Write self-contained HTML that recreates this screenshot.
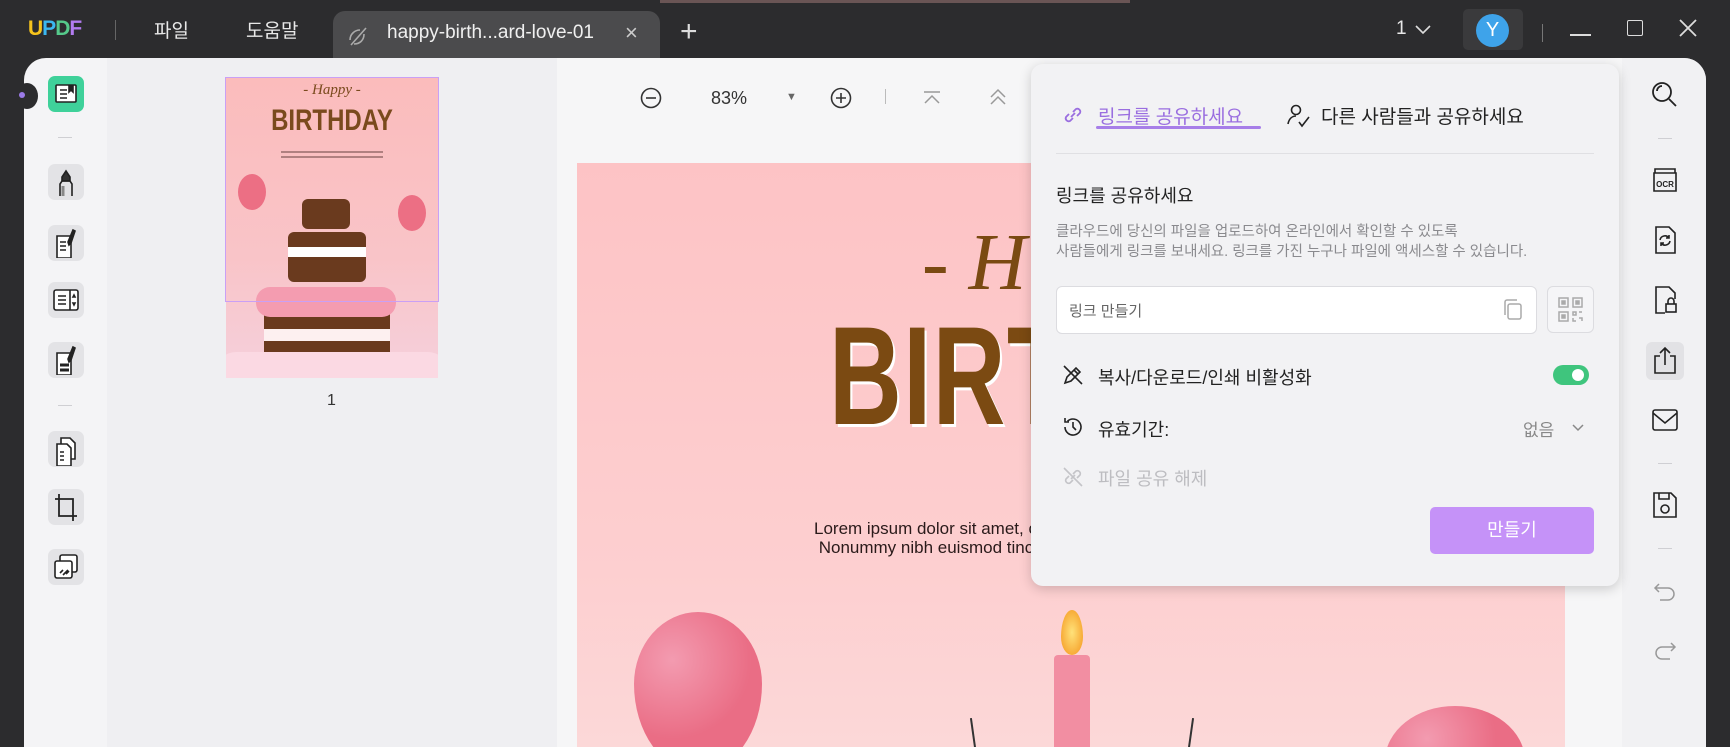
<!DOCTYPE html>
<html><head><meta charset="utf-8">
<style>
*{margin:0;padding:0;box-sizing:border-box}
body{width:1730px;height:747px;overflow:hidden;background:#2c2c2e;font-family:"Liberation Sans","Noto Sans CJK KR",sans-serif;position:relative}
.a{position:absolute}
.tb{color:#e8e8e8;font-size:19px}
.ib{position:absolute;left:48px;width:36px;height:36px;border-radius:7px;background:#e3e3e6}
.ri{position:absolute;left:1649px;width:32px;height:32px}
.sep{position:absolute;height:1px;background:#cfcfd3}
svg{display:block}
</style></head><body>
<!-- title bar -->
<div class="a" style="left:660px;top:0;width:470px;height:3px;background:#6a5555"></div>
<div class="a" style="left:28px;top:17px;font-size:21px;font-weight:bold;letter-spacing:-1px"><span style="color:#f5c31c">U</span><span style="color:#3bb8f0">P</span><span style="color:#55c98a">D</span><span style="color:#b27cf0">F</span></div>
<div class="a" style="left:115px;top:20px;width:1px;height:20px;background:#666"></div>
<div class="a tb" style="left:154px;top:16px">파일</div>
<div class="a tb" style="left:246px;top:16px">도움말</div>
<div class="a" style="left:333px;top:11px;width:327px;height:50px;background:#4b4b4d;border-radius:12px 12px 0 0"></div>
<svg class="a" style="left:346px;top:24px" width="24" height="24" viewBox="0 0 24 24" fill="none" stroke="#aaa" stroke-width="1.6"><path d="M4 16c0-6 5-10 10-10M8 20c6 0 10-4 10-10M5 21L20 4"/></svg>
<div class="a" style="left:387px;top:22px;color:#f0f0f0;font-size:19px">happy-birth...ard-love-01</div>
<div class="a" style="left:625px;top:20px;color:#ccc;font-size:22px">×</div>
<div class="a" style="left:680px;top:15px;color:#ddd;font-size:30px;font-weight:300">+</div>
<div class="a tb" style="left:1396px;top:18px">1</div>
<svg class="a" style="left:1414px;top:22px" width="18" height="14" viewBox="0 0 18 14" fill="none" stroke="#ddd" stroke-width="1.6"><path d="M2 4l7 7 7-7"/></svg>
<div class="a" style="left:1463px;top:9px;width:60px;height:41px;background:#3a3a3c;border-radius:5px"></div>
<div class="a" style="left:1476px;top:14px;width:33px;height:33px;border-radius:50%;background:#3ea3ea;color:#fff;font-size:20px;text-align:center;line-height:33px">Y</div>
<div class="a" style="left:1542px;top:24px;width:1px;height:18px;background:#777"></div>
<div class="a" style="left:1570px;top:34px;width:21px;height:2px;background:#ddd"></div>
<div class="a" style="left:1627px;top:20px;width:16px;height:16px;border:1.8px solid #ddd;border-radius:2px"></div>
<svg class="a" style="left:1679px;top:19px" width="18" height="18" viewBox="0 0 18 18" stroke="#ddd" stroke-width="1.8"><path d="M1 1l16 16M17 1L1 17"/></svg>

<!-- main container -->
<div class="a" style="left:24px;top:58px;width:1682px;height:689px;background:#f4f4f6;border-radius:22px 22px 0 0;overflow:hidden">
  <div class="a" style="left:83px;top:0;width:450px;height:689px;background:#efeff2"></div>
  <div class="a" style="left:533px;top:0;width:1065px;height:689px;background:#f6f6f7"></div>
  <div class="a" style="left:1598px;top:0;width:84px;height:689px;background:#f1f1f3"></div>
</div>
<div class="a" style="left:16px;top:83px;width:22px;height:26px;border-radius:50%;background:#2c2c2e"></div>
<div class="a" style="left:19px;top:92px;width:6px;height:6px;border-radius:50%;background:#9b7ae8"></div>

<!-- left toolbar -->
<div class="ib" style="top:76px;background:#3fd19a"></div>
<svg class="a" style="left:54px;top:82px" width="24" height="24" viewBox="0 0 24 24" fill="#fff" stroke="#222" stroke-width="1.6"><rect x="2" y="3" width="20" height="17" rx="1"/><path d="M6 8h7M6 12h7M6 16h7" /><path d="M15 3v7l2-2 2 2V3" fill="#222"/></svg>
<div class="sep" style="left:58px;top:137px;width:14px"></div>
<div class="ib" style="top:164px"></div>
<svg class="a" style="left:54px;top:168px" width="24" height="28" viewBox="0 0 24 28" fill="none" stroke="#222" stroke-width="1.6"><path d="M12 3l4 6v4H8V9z" fill="#333"/><path d="M6 28V16l2-3h8l2 3v12"/><path d="M9 18v10" stroke="#888" stroke-width="3"/></svg>
<div class="ib" style="top:225px"></div>
<svg class="a" style="left:53px;top:228px" width="26" height="30" viewBox="0 0 26 30" fill="#fff" stroke="#222" stroke-width="1.6"><path d="M4 8h14v22H4z"/><path d="M7 14h6M7 18h6M7 22h6"/><path d="M20 2l2 1-4 12-2 2-1-3z" fill="#222"/></svg>
<div class="ib" style="top:282px"></div>
<svg class="a" style="left:52px;top:288px" width="28" height="24" viewBox="0 0 28 24" fill="#fff" stroke="#222" stroke-width="1.6"><rect x="2" y="2" width="24" height="20" rx="2"/><path d="M6 8h8M6 12h8M6 16h8M18 2v20"/><path d="M21 9l1-2 1 2zM21 15l1 2 1-2z" fill="#222"/></svg>
<div class="ib" style="top:342px"></div>
<svg class="a" style="left:53px;top:345px" width="26" height="30" viewBox="0 0 26 30" fill="#fff" stroke="#222" stroke-width="1.6"><path d="M4 8h14v22H4z"/><path d="M7 20h9M7 25h9" stroke-width="3"/><path d="M20 2l2 1-4 12-2 2-1-3z" fill="#222"/></svg>
<div class="sep" style="left:58px;top:405px;width:14px"></div>
<div class="ib" style="top:431px"></div>
<svg class="a" style="left:53px;top:436px" width="26" height="30" viewBox="0 0 26 30" fill="#fff" stroke="#222" stroke-width="1.6"><path d="M8 2h9l5 5v16H8z"/><path d="M4 8h10l4 4v18H4z"/><path d="M7 16h4M7 20h4M7 24h4"/></svg>
<div class="ib" style="top:489px"></div>
<svg class="a" style="left:52px;top:492px" width="28" height="30" viewBox="0 0 28 30" fill="none" stroke="#222" stroke-width="1.8"><path d="M7 2v22h18M3 7h18v22"/></svg>
<div class="ib" style="top:549px"></div>
<svg class="a" style="left:53px;top:553px" width="26" height="28" viewBox="0 0 26 28" fill="#fff" stroke="#222" stroke-width="1.6"><rect x="7" y="2" width="17" height="17" rx="2"/><rect x="2" y="8" width="17" height="17" rx="2"/><path d="M7 20l3-3M10 22l5-5M13 21l3-3"/></svg>

<!-- thumbnail -->
<div class="a" style="left:226px;top:77px;width:212px;height:301px;background:linear-gradient(#fbbcbc,#f9c4c8 60%,#f5d0dc);overflow:hidden">
  <div class="a" style="left:0;top:5px;width:212px;text-align:center;font-family:'Liberation Serif',serif;font-style:italic;color:#7a4a1d;font-size:15px">- Happy -</div>
  <div class="a" style="left:0;top:27px;width:212px;text-align:center;font-family:'Liberation Sans Narrow','Liberation Sans',sans-serif;font-weight:bold;color:#7a4a1d;font-size:30px;transform:scaleX(.8)">BIRTHDAY</div>
  <div class="a" style="left:55px;top:74px;width:102px;height:2px;background:#b08080"></div>
  <div class="a" style="left:55px;top:79px;width:102px;height:2px;background:#b08080"></div>
  <div class="a" style="left:12px;top:97px;width:28px;height:36px;border-radius:50%;background:#ec6f84"></div>
  <div class="a" style="left:172px;top:118px;width:28px;height:36px;border-radius:50%;background:#ec6f84"></div>
  <div class="a" style="left:76px;top:122px;width:48px;height:30px;background:#6a3a1e;border-radius:6px"></div>
  <div class="a" style="left:62px;top:155px;width:78px;height:50px;background:#6a3a1e;border-radius:6px"></div>
  <div class="a" style="left:62px;top:170px;width:78px;height:10px;background:#fff"></div>
  <div class="a" style="left:38px;top:230px;width:126px;height:55px;background:#6a3a1e;border-radius:8px"></div>
  <div class="a" style="left:38px;top:252px;width:126px;height:12px;background:#fdf0f0"></div>
  <div class="a" style="left:30px;top:210px;width:140px;height:30px;background:#f49cb0;border-radius:14px"></div>
  <div class="a" style="left:-10px;top:275px;width:232px;height:40px;background:#fbd9e3;border-radius:20px"></div>
</div>
<div class="a" style="left:225px;top:77px;width:214px;height:225px;border:1.5px solid #c9a0f5"></div>
<div class="a" style="left:327px;top:392px;font-size:16px;color:#333">1</div>

<!-- doc toolbar -->
<svg class="a" style="left:640px;top:87px" width="22" height="22" viewBox="0 0 22 22" fill="none" stroke="#333" stroke-width="1.6"><circle cx="11" cy="11" r="9.5"/><path d="M6 11h10"/></svg>
<div class="a" style="left:711px;top:88px;font-size:18px;color:#333">83%</div>
<div class="a" style="left:786px;top:91px;font-size:11px;color:#666">▼</div>
<svg class="a" style="left:830px;top:87px" width="22" height="22" viewBox="0 0 22 22" fill="none" stroke="#333" stroke-width="1.6"><circle cx="11" cy="11" r="9.5"/><path d="M6 11h10M11 6v10"/></svg>
<div class="a" style="left:885px;top:89px;width:1px;height:15px;background:#bbb"></div>
<svg class="a" style="left:922px;top:90px" width="20" height="16" viewBox="0 0 20 16" fill="none" stroke="#999" stroke-width="1.5"><path d="M2 2h16M3 13l7-7 7 7"/></svg>
<svg class="a" style="left:988px;top:88px" width="20" height="18" viewBox="0 0 20 18" fill="none" stroke="#999" stroke-width="1.5"><path d="M3 9l7-7 7 7M3 16l7-7 7 7"/></svg>

<!-- page -->
<div class="a" style="left:577px;top:163px;width:988px;height:584px;background:linear-gradient(#fdc3c5,#fdcfd0 70%,#fcd8d8);overflow:hidden">
  <div class="a" style="left:345px;top:55px;font-family:'Liberation Serif',serif;font-style:italic;color:#7a4a12;font-size:80px">- H</div>
  <div class="a" style="left:252px;top:138px;font-family:'Liberation Sans Narrow','Liberation Sans',sans-serif;font-weight:bold;color:#7b4a12;font-size:140px;line-height:150px;letter-spacing:2px;transform:scaleX(.72);transform-origin:left;text-shadow:3px 3px 0 #fff">BIRTHDAY</div>
  <div class="a" style="left:237px;top:356px;width:700px;color:#2a1a1a;font-size:17px;line-height:19px">Lorem ipsum dolor sit amet, consectetuer adipiscing elit, sed<br>&nbsp;Nonummy nibh euismod tincidunt ut laoreet dolore magna</div>
  <div class="a" style="left:57px;top:449px;width:128px;height:160px;border-radius:50% 50% 50% 50%/45% 45% 55% 55%;background:radial-gradient(circle at 30% 30%,#f39bb0,#ea6d85 55%)"></div>
  <div class="a" style="left:808px;top:543px;width:140px;height:110px;border-radius:50%;background:radial-gradient(circle at 30% 30%,#f39bb0,#ea6d85 55%)"></div>
  <div class="a" style="left:477px;top:492px;width:36px;height:120px;background:#f28ea2;border-radius:4px"></div>
  <div class="a" style="left:484px;top:447px;width:22px;height:45px;border-radius:50% 50% 50% 50%/60% 60% 40% 40%;background:radial-gradient(#ffe27a,#f4951c)"></div>
  <div class="a" style="left:395px;top:555px;width:2px;height:30px;background:#333;transform:rotate(-8deg)"></div>
  <div class="a" style="left:613px;top:555px;width:2px;height:30px;background:#333;transform:rotate(8deg)"></div>
</div>

<!-- right toolbar -->
<svg class="ri" style="top:79px" viewBox="0 0 32 32" fill="none" stroke="#222" stroke-width="1.8"><circle cx="13" cy="13" r="9"/><path d="M20 20l7 7M8 12a5 5 0 0 1 5-5"/></svg>
<div class="sep" style="left:1658px;top:138px;width:14px"></div>
<svg class="ri" style="top:164px" viewBox="0 0 32 32" fill="none" stroke="#222" stroke-width="1.6"><path d="M6 9V5h20v4M5 9h22v18H5z"/><text x="16" y="23" font-size="8" font-family="Liberation Sans" text-anchor="middle" fill="#222" stroke="none" font-weight="bold">OCR</text></svg>
<svg class="ri" style="top:224px" viewBox="0 0 32 32" fill="none" stroke="#222" stroke-width="1.6"><path d="M7 3h13l6 6v20H7z"/><path d="M11 16a5 5 0 0 1 9-2M21 17a5 5 0 0 1-9 2M20 11v3h-3M12 22v-3h3"/></svg>
<svg class="ri" style="top:284px" viewBox="0 0 32 32" fill="none" stroke="#222" stroke-width="1.6"><path d="M16 29H7V3h13l6 6v6"/><rect x="17" y="20" width="10" height="8"/><path d="M19 20v-3a3 3 0 0 1 6 0v3"/></svg>
<div class="a" style="left:1646px;top:342px;width:38px;height:38px;border-radius:6px;background:#e2e2e5"></div>
<svg class="ri" style="top:345px" viewBox="0 0 32 32" fill="none" stroke="#222" stroke-width="1.6"><path d="M11 11H6v17h20V11h-5M16 3v17M11 8l5-5 5 5"/></svg>
<svg class="ri" style="top:404px" viewBox="0 0 32 32" fill="none" stroke="#222" stroke-width="1.6"><rect x="4" y="6" width="24" height="20" rx="2"/><path d="M4 9l12 10 12-10"/></svg>
<div class="sep" style="left:1658px;top:463px;width:14px"></div>
<svg class="ri" style="top:489px" viewBox="0 0 32 32" fill="none" stroke="#222" stroke-width="1.6"><path d="M5 4h17l5 5v19H5z"/><path d="M10 4v6h10V4"/><circle cx="16" cy="20" r="4"/></svg>
<div class="sep" style="left:1658px;top:548px;width:14px"></div>
<svg class="ri" style="top:577px" viewBox="0 0 32 32" fill="none" stroke="#999" stroke-width="1.5"><path d="M10 7l-4 4 4 4M6 11h13a6 6 0 0 1 0 12h-8"/></svg>
<svg class="ri" style="top:636px" viewBox="0 0 32 32" fill="none" stroke="#999" stroke-width="1.5"><path d="M22 7l4 4-4 4M26 11H13a6 6 0 0 0 0 12h8"/></svg>

<!-- share panel -->
<div class="a" style="left:1031px;top:64px;width:588px;height:522px;background:#f2f2f4;border-radius:12px;box-shadow:0 3px 12px rgba(0,0,0,.18)"></div>
<svg class="a" style="left:1061px;top:103px" width="24" height="24" viewBox="0 0 24 24" fill="none" stroke="#9a6ee0" stroke-width="1.8"><path d="M10 14l4-4M8 11l-3 3a3 3 0 0 0 4 4l3-3M16 13l3-3a3 3 0 0 0-4-4l-3 3"/></svg>
<div class="a" style="left:1098px;top:102px;color:#9a6ee0;font-size:19px">링크를 공유하세요</div>
<div class="a" style="left:1096px;top:126px;width:165px;height:3px;background:#a77ee8;border-radius:2px"></div>
<svg class="a" style="left:1286px;top:102px" width="26" height="26" viewBox="0 0 26 26" fill="none" stroke="#222" stroke-width="1.6"><circle cx="10" cy="8" r="4.5"/><path d="M2 22c1-5 4-8 8-8M13 20l3 4 7-9"/></svg>
<div class="a" style="left:1321px;top:102px;color:#222;font-size:19px">다른 사람들과 공유하세요</div>
<div class="a" style="left:1056px;top:153px;width:538px;height:1px;background:#e0e0e3"></div>
<div class="a" style="left:1056px;top:182px;color:#222;font-size:18px">링크를 공유하세요</div>
<div class="a" style="left:1056px;top:222px;color:#8a8a8e;font-size:14.5px;line-height:20px">클라우드에 당신의 파일을 업로드하여 온라인에서 확인할 수 있도록<br>사람들에게 링크를 보내세요. 링크를 가진 누구나 파일에 액세스할 수 있습니다.</div>
<div class="a" style="left:1056px;top:286px;width:481px;height:48px;background:#fff;border:1px solid #dcdce0;border-radius:6px"></div>
<div class="a" style="left:1069px;top:300px;color:#666;font-size:15px">링크 만들기</div>
<svg class="a" style="left:1502px;top:298px" width="22" height="24" viewBox="0 0 22 24" fill="none" stroke="#aaa" stroke-width="1.5"><rect x="6" y="6" width="13" height="15" rx="2"/><path d="M3 17V4a2 2 0 0 1 2-2h10"/></svg>
<div class="a" style="left:1547px;top:286px;width:47px;height:47px;background:#f5f5f7;border:1px solid #dcdce0;border-radius:6px"></div>
<svg class="a" style="left:1557px;top:296px" width="27" height="27" viewBox="0 0 27 27" fill="none" stroke="#aaa" stroke-width="1.5"><rect x="2" y="2" width="9" height="9"/><rect x="16" y="2" width="9" height="9"/><rect x="2" y="16" width="9" height="9"/><path d="M16 16h3v3h-3zM22 16h3M16 22v3h3M22 22h3v3"/><rect x="5" y="5" width="3" height="3" fill="#aaa"/><rect x="19" y="5" width="3" height="3" fill="#aaa"/><rect x="5" y="19" width="3" height="3" fill="#aaa"/></svg>
<svg class="a" style="left:1061px;top:363px" width="24" height="24" viewBox="0 0 24 24" fill="none" stroke="#222" stroke-width="1.6"><path d="M4 20l2-6 9-9 4 4-9 9zM13 7l4 4M3 3l18 18"/></svg>
<div class="a" style="left:1098px;top:364px;color:#222;font-size:18px">복사/다운로드/인쇄 비활성화</div>
<div class="a" style="left:1553px;top:365px;width:36px;height:20px;border-radius:10px;background:#3fc57d"></div>
<div class="a" style="left:1572px;top:369px;width:12px;height:12px;border-radius:50%;background:#fff"></div>
<svg class="a" style="left:1061px;top:415px" width="24" height="24" viewBox="0 0 24 24" fill="none" stroke="#222" stroke-width="1.6"><path d="M4 12a8 8 0 1 0 2.5-5.8M4 3v4h4M12 7v5l3 3"/></svg>
<div class="a" style="left:1098px;top:416px;color:#222;font-size:18px">유효기간:</div>
<div class="a" style="left:1523px;top:416px;color:#888;font-size:17px">없음</div>
<svg class="a" style="left:1571px;top:423px" width="14" height="10" viewBox="0 0 14 10" fill="none" stroke="#888" stroke-width="1.5"><path d="M2 2l5 5 5-5"/></svg>
<svg class="a" style="left:1061px;top:465px" width="24" height="24" viewBox="0 0 24 24" fill="none" stroke="#c4c4c8" stroke-width="1.6"><path d="M10 14l4-4M8 11l-3 3a3 3 0 0 0 4 4l3-3M16 13l3-3a3 3 0 0 0-4-4l-3 3M3 3l18 18"/></svg>
<div class="a" style="left:1098px;top:465px;color:#bdbdc1;font-size:18px">파일 공유 해제</div>
<div class="a" style="left:1430px;top:507px;width:164px;height:47px;border-radius:5px;background:#c592f8;color:#fff;font-size:18px;text-align:center;line-height:47px">만들기</div>
</body></html>
